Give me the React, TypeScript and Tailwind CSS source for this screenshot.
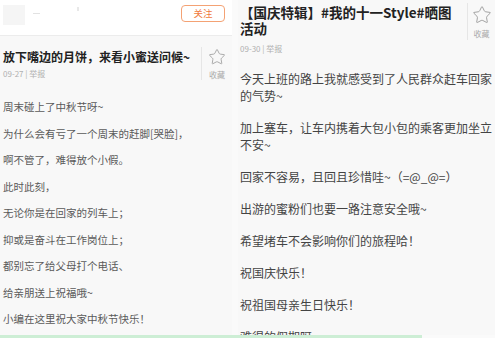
import { Star } from "lucide-react";

const leftLines = [
  "周末碰上了中秋节呀~",
  "为什么会有亏了一个周末的赶脚[哭脸]，",
  "啊不管了，难得放个小假。",
  "此时此刻，",
  "无论你是在回家的列车上；",
  "抑或是奋斗在工作岗位上；",
  "都别忘了给父母打个电话、",
  "给亲朋送上祝福哦~",
  "小编在这里祝大家中秋节快乐！",
];

const rightLines = [
  "今天上班的路上我就感受到了人民群众赶车回家的气势~",
  "加上塞车，让车内携着大包小包的乘客更加坐立不安~",
  "回家不容易，且回且珍惜哇~（=@_@=）",
  "出游的蜜粉们也要一路注意安全哦~",
  "希望堵车不会影响你们的旅程哈！",
  "祝国庆快乐！",
  "祝祖国母亲生日快乐！",
  "难得的假期呀",
];

function Collect({ className }: { className: string }) {
  return (
    <div className={`flex flex-col items-center border-l border-[#e6e6e6] ${className}`}>
      <Star className="h-[20px] w-[20px] text-[#9a9a9a]" strokeWidth={1.1} />
      <span className="mt-[4px] text-[8px] leading-[10px] text-[#aaa]">收藏</span>
    </div>
  );
}

export default function App() {
  return (
    <div
      className="flex h-[338px] w-[495px] flex-col overflow-hidden bg-[#fafafa]"
      style={{ fontFamily: '"Noto Sans CJK SC", "Noto Sans", sans-serif' }}
    >
      <div className="flex flex-1 overflow-hidden">
        {/* Left screen */}
        <div className="flex w-[232px] flex-col bg-[#f8f8f8]">
          <div className="flex h-[36px] items-start border-b border-[#ececec] bg-white px-[3px] pt-[5px]">
            <div className="h-[20px] w-[22px] bg-[#f5f5f5]" />
            <div className="ml-[8px] mt-[8px] h-[1px] w-[7px] bg-[#e2e2e2]" />
            <div className="ml-[37px] mt-[2px] h-[4px] w-[2px] bg-[#e8e8e8]" />
            <div className="flex-1" />
            <button className="mr-[4px] flex h-[17px] w-[44px] items-center justify-center rounded-[4px] border border-[#f4a274] text-[9.5px] text-[#f07a3c]">
              关注
            </button>
          </div>

          <div className="mt-[11px] flex">
            <div className="flex-1 pl-[3px] pt-[2px]">
              <h2 className="text-[12px] font-bold leading-[16px] text-[#222]">
                放下嘴边的月饼，来看小蜜送问候~
              </h2>
              <p className="mt-[3px] text-[8px] leading-[12px] text-[#b0b0b0]">09-27 | 举报</p>
            </div>
            <Collect className="h-[33px] w-[31px] pt-[1px]" />
          </div>

          <div className="mt-[19px] flex flex-col gap-[11.5px] pl-[3px]">
            {leftLines.map((line) => (
              <p key={line} className="text-[10.5px] leading-[15px] text-[#5a5a5a]">
                {line}
              </p>
            ))}
          </div>
        </div>

        <div className="w-[6px]" />

        {/* Right screen */}
        <div className="flex flex-1 flex-col bg-[#f8f8f8] pl-[2px]">
          <div className="flex">
            <div className="flex-1 pt-[4px]">
              <h2 className="text-[13.5px] font-bold leading-[16px] text-[#222]">
                【国庆特辑】#我的十一Style#晒图
                <br />
                活动
              </h2>
              <p className="mt-[7px] text-[8px] leading-[12px] text-[#b0b0b0]">09-30 | 举报</p>
            </div>
            <Collect className="mt-[3px] h-[37px] w-[28px] pt-[2px]" />
          </div>

          <div className="mt-[15px] flex flex-col gap-[15px]">
            {rightLines.map((line) => (
              <p key={line} className="w-[255px] text-[12px] leading-[17px] text-[#444]">
                {line}
              </p>
            ))}
          </div>
        </div>
      </div>
      <div className="h-[3px] w-[422px] bg-[#cdeed5]" />
    </div>
  );
}
